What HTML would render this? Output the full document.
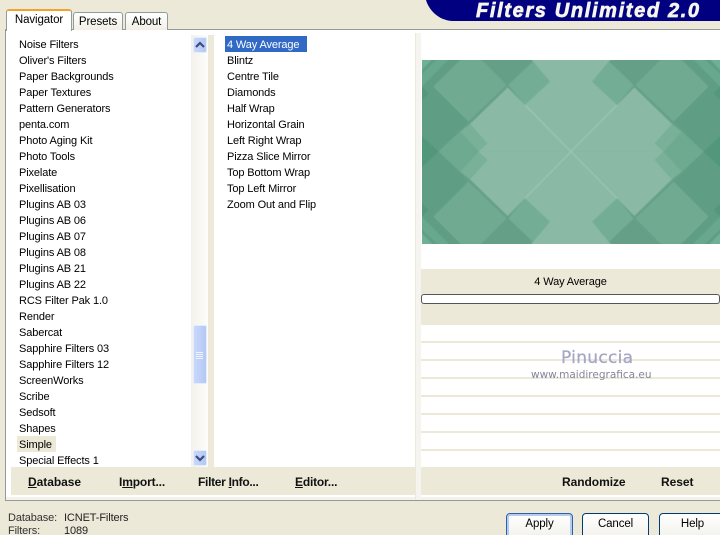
<!DOCTYPE html>
<html><head><meta charset="utf-8">
<style>
html,body{margin:0;padding:0;width:720px;height:535px;overflow:hidden}
#w{position:absolute;left:0;top:0;width:720px;height:535px;overflow:hidden;background:#ece9d8;font-family:"Liberation Sans",sans-serif;font-size:11px;letter-spacing:-.12px;color:#000}
#w div{position:absolute;white-space:nowrap}
u{text-decoration:underline}
.r{left:19px;height:16px;line-height:18px}
.m{left:227px;height:16px;line-height:18px}
#w .b{font-weight:bold;font-size:12px;top:475px;line-height:15px;color:#111;letter-spacing:-.05px}
.tab{background:linear-gradient(#fff,#f1efe6);border:1px solid #919b9c;border-bottom:none;border-radius:3px 3px 0 0;text-align:center;box-sizing:border-box}
.btn{top:513px;height:30px;box-sizing:border-box;border:1px solid #003c74;border-radius:4px;background:linear-gradient(#fff,#f0efe8);text-align:center;line-height:20px;font-size:11.5px}
.ln{left:421px;width:299px;height:2px;background:#ece9d8}
.sb{left:193px;width:14px;box-sizing:border-box;background:linear-gradient(90deg,#c9d8fb,#b4c8f6);border:1px solid #e4ecfc;border-radius:2px}
</style></head><body><div id="w">

<!-- header -->
<svg style="position:absolute;left:426px;top:0" width="294" height="21"><path d="M0 0H294V21H26C12 20 3 10 0 0Z" fill="#000080"/></svg>
<div style="left:476px;top:0;font:italic bold 20px/22px 'Liberation Sans',sans-serif;color:#f6f6ee;letter-spacing:1.65px;-webkit-text-stroke:.7px #f6f6ee">Filters Unlimited 2.0</div>

<!-- panel -->
<div style="left:5px;top:29px;width:716px;height:472px;box-sizing:border-box;border:1px solid #919b9c;border-right:none;background:#fff;box-shadow:inset 0 -3px 0 #f4f2ea"></div>

<!-- tabs -->
<div class="tab" style="left:73px;top:12px;width:50px;height:18px;line-height:19px;font-size:11.5px">Presets</div>
<div class="tab" style="left:125px;top:12px;width:43px;height:18px;line-height:19px;font-size:11.5px">About</div>
<div style="left:6px;top:9px;width:66px;height:22px;box-sizing:border-box;background:#fff;border:1px solid #919b9c;border-bottom:none;border-top:2px solid #f2a32c;border-radius:3px 3px 0 0;text-align:center;line-height:18px;font-size:11.5px">Navigator</div>

<!-- scrollbar & strips -->
<div style="left:191px;top:35px;width:17px;height:432px;background:linear-gradient(90deg,#f3f1ea,#fdfdfb)"></div>
<div style="left:208px;top:35px;width:6px;height:432px;background:#ece9d8"></div>
<div style="left:415px;top:33px;width:6px;height:467px;background:#f6f4ee;border-left:1px solid #ece9d8;box-sizing:border-box"></div>

<div class="sb" style="top:37px;height:16px"></div>
<svg style="position:absolute;left:193px;top:37px" width="14" height="16"><path d="M3 10L7 6L11 10" fill="none" stroke="#3a4d7c" stroke-width="2.2"/></svg>
<div class="sb" style="top:325px;height:59px"></div>
<svg style="position:absolute;left:193px;top:325px" width="14" height="59"><path d="M3 27.500H10M3 29.500H10M3 31.500H10M3 33.500H10" stroke="#eef3fe" stroke-width="1"/></svg>
<div class="sb" style="top:450px;height:16px"></div>
<svg style="position:absolute;left:193px;top:450px" width="14" height="16"><path d="M3 6L7 10L11 6" fill="none" stroke="#3a4d7c" stroke-width="2.2"/></svg>

<!-- list 1 -->
<div style="left:17px;top:436px;width:39px;height:16px;background:#ece9d8"></div>
<div class="r" style="top:36px">Noise Filters</div>
<div class="r" style="top:52px">Oliver's Filters</div>
<div class="r" style="top:68px">Paper Backgrounds</div>
<div class="r" style="top:84px">Paper Textures</div>
<div class="r" style="top:100px">Pattern Generators</div>
<div class="r" style="top:116px">penta.com</div>
<div class="r" style="top:132px">Photo Aging Kit</div>
<div class="r" style="top:148px">Photo Tools</div>
<div class="r" style="top:164px">Pixelate</div>
<div class="r" style="top:180px">Pixellisation</div>
<div class="r" style="top:196px">Plugins AB 03</div>
<div class="r" style="top:212px">Plugins AB 06</div>
<div class="r" style="top:228px">Plugins AB 07</div>
<div class="r" style="top:244px">Plugins AB 08</div>
<div class="r" style="top:260px">Plugins AB 21</div>
<div class="r" style="top:276px">Plugins AB 22</div>
<div class="r" style="top:292px">RCS Filter Pak 1.0</div>
<div class="r" style="top:308px">Render</div>
<div class="r" style="top:324px">Sabercat</div>
<div class="r" style="top:340px">Sapphire Filters 03</div>
<div class="r" style="top:356px">Sapphire Filters 12</div>
<div class="r" style="top:372px">ScreenWorks</div>
<div class="r" style="top:388px">Scribe</div>
<div class="r" style="top:404px">Sedsoft</div>
<div class="r" style="top:420px">Shapes</div>
<div class="r" style="top:436px">Simple</div>
<div class="r" style="top:452px">Special Effects 1</div>

<!-- list 2 -->
<div style="left:225px;top:36px;width:82px;height:16px;background:#316ac5"></div>
<div class="m" style="top:36px;color:#fff">4 Way Average</div>
<div class="m" style="top:52px">Blintz</div>
<div class="m" style="top:68px">Centre Tile</div>
<div class="m" style="top:84px">Diamonds</div>
<div class="m" style="top:100px">Half Wrap</div>
<div class="m" style="top:116px">Horizontal Grain</div>
<div class="m" style="top:132px">Left Right Wrap</div>
<div class="m" style="top:148px">Pizza Slice Mirror</div>
<div class="m" style="top:164px">Top Bottom Wrap</div>
<div class="m" style="top:180px">Top Left Mirror</div>
<div class="m" style="top:196px">Zoom Out and Flip</div>

<!-- preview -->
<div style="left:422px;top:60px;width:298px;height:184px;overflow:hidden">
<svg style="position:absolute;left:-6px;top:-6px;filter:blur(.6px)" width="310" height="196" viewBox="18 12 930 588" preserveAspectRatio="none">
<defs><g id="q">
<polygon points="18,12 178,12 70,110 175,215 85,305 18,305" fill="#5f9d84"/>
<polygon points="18,88 98,12 133,12 18,128" fill="#68a88e"/>
<polygon points="18,12 83,12 18,78" fill="#70b097"/>
<polygon points="18,92 55,130 18,168" fill="#539878"/>
<polygon points="18,242 85,305 18,305" fill="#529779"/>
<polygon points="197,12 386,12 290,105" fill="#669f87"/>
<polygon points="70,110 168,12 197,12 290,105 175,215" fill="#70aa91"/>
<polygon points="85,305 150,245 205,305" fill="#6eaa90"/>
<polygon points="150,245 180,222 232,280 205,305" fill="#79b098"/>
<polygon points="295,105 368,35 420,95 345,165" fill="#74ad95"/>
<polygon points="483,305 293,112 180,222 232,280 205,305" fill="#8abaa5"/>
<polygon points="483,305 345,165 420,95 350,12 483,12" fill="#8abaa5"/>
<line x1="483" y1="305" x2="345" y2="165" stroke="#a0cab7" stroke-width="3"/>
</g></defs>
<rect x="18" y="12" width="930" height="588" fill="#669f87"/>
<use href="#q"/>
<use href="#q" transform="matrix(-1 0 0 1 966 0)"/>
<use href="#q" transform="matrix(1 0 0 -1 0 610)"/>
<use href="#q" transform="matrix(-1 0 0 -1 966 610)"/>
</svg></div>

<!-- info band -->
<div style="left:421px;top:269px;width:299px;height:56px;background:#ece9d8"></div>
<div style="left:421px;top:274px;width:299px;text-align:center;line-height:16px">4 Way Average</div>
<div style="left:421px;top:294px;width:299px;height:10px;box-sizing:border-box;background:#fff;border:1px solid #555;border-radius:3px"></div>

<div class="ln" style="top:341px"></div>
<div class="ln" style="top:359px"></div>
<div class="ln" style="top:377px"></div>
<div class="ln" style="top:395px"></div>
<div class="ln" style="top:413px"></div>
<div class="ln" style="top:431px"></div>
<div class="ln" style="top:449px"></div>

<div style="left:561px;top:347px;font:17px/22px 'DejaVu Sans',sans-serif;color:#a6a6c6;letter-spacing:.3px;-webkit-text-stroke:.3px #a6a6c6">Pinuccia</div>
<div style="left:531px;top:368px;font:10.500px/14px 'DejaVu Sans',sans-serif;color:#85859b;letter-spacing:0">www.maidiregrafica.eu</div>

<!-- bottom bars -->
<div style="left:11px;top:467px;width:404px;height:28px;background:#ece9d8"></div>
<div style="left:421px;top:467px;width:299px;height:28px;background:#ece9d8"></div>
<div class="b" style="left:28px"><u>D</u>atabase</div>
<div class="b" style="left:119px;letter-spacing:-.15px">I<u>m</u>port...</div>
<div class="b" style="left:198px;letter-spacing:-.3px">Filter <u>I</u>nfo...</div>
<div class="b" style="left:295px;letter-spacing:-.2px"><u>E</u>ditor...</div>
<div class="b" style="left:562px">Randomize</div>
<div class="b" style="left:661px">Reset</div>

<!-- status -->
<div style="left:8px;top:511px;line-height:15px;color:#333">Database:</div>
<div style="left:64px;top:511px;line-height:15px;color:#222">ICNET-Filters</div>
<div style="left:8px;top:524px;line-height:15px;color:#333">Filters:</div>
<div style="left:64px;top:524px;line-height:15px;color:#222">1089</div>

<!-- buttons -->
<div class="btn" style="left:506px;width:67px;border-color:#2d62a8;box-shadow:inset 0 0 0 2px #b5cbf0">Apply</div>
<div class="btn" style="left:582px;width:67px">Cancel</div>
<div class="btn" style="left:659px;width:67px">Help</div>

</div></body></html>
